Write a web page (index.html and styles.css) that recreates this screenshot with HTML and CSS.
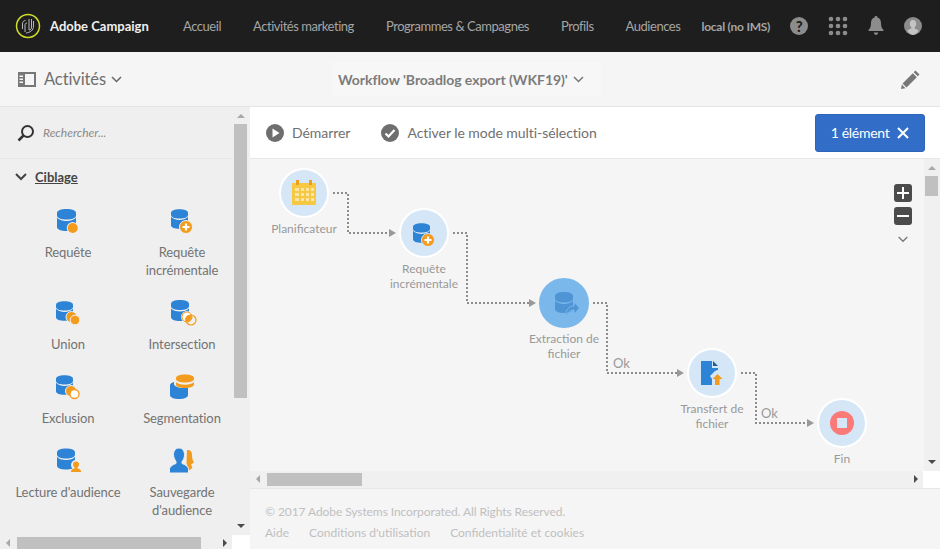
FILE: index.html
```html
<!DOCTYPE html>
<html lang="fr">
<head>
    <meta charset="UTF-8">
    <title>Adobe Campaign</title>
    <link rel="stylesheet" href="styles.css">
</head>
<body>
    <svg class="defs" width="0" height="0">
        <symbol id="db" viewBox="0 0 19 22">
            <path fill="#2d84d6" d="M0 4C0 1.500 4 0 9.500 0S19 1.500 19 4v2.500c0 2.500-4 4-9.500 4S0 9 0 6.500z"/>
            <path fill="#2d84d6" d="M0 8.500c1.500 2.300 5.500 3.500 9.500 3.500s8-1.200 9.500-3.500V18c0 2.500-4 4-9.500 4S0 20.500 0 18z"/>
        </symbol>
    </svg>

    <header class="topbar">
        <div class="brand">
            <svg class="brand-logo" width="26" height="26" viewBox="0 0 26 26">
                <circle cx="13" cy="13" r="11.500" fill="none" stroke="#cfdc2b" stroke-width="1.500"/>
                <path d="M7.500 16V11c0-2 1-3.500 3-3.500M10 19v-7c0-1 .5-2 2-2M14 17V6M16.500 14V6M14 17c2 0 2.500-1.500 2.500-3M11 20c4-.5 7.500-2.500 7.500-7V8" fill="none" stroke="#b9b9b9" stroke-width="1"/>
            </svg>
            <span>Adobe Campaign</span>
        </div>
        <nav class="topnav">
            <a href="#">Accueil</a>
            <a href="#">Activités marketing</a>
            <a href="#">Programmes &amp; Campagnes</a>
            <a href="#">Profils</a>
            <a href="#">Audiences</a>
        </nav>
        <span class="instance">local (no IMS)</span>
        <div class="top-icons">
            <span class="help">?</span>
            <svg width="20" height="20" viewBox="0 0 20 20" fill="#8c8c8c">
                <circle cx="3" cy="3" r="2.300"/><circle cx="10" cy="3" r="2.300"/><circle cx="17" cy="3" r="2.300"/>
                <circle cx="3" cy="10" r="2.300"/><circle cx="10" cy="10" r="2.300"/><circle cx="17" cy="10" r="2.300"/>
                <circle cx="3" cy="17" r="2.300"/><circle cx="10" cy="17" r="2.300"/><circle cx="17" cy="17" r="2.300"/>
            </svg>
            <svg width="16" height="20" viewBox="0 0 16 20" fill="#8c8c8c">
                <path d="M8 0c1 0 1.500.7 1.500 1.500C12 2.300 13 4.500 13 7c0 4 1 5.500 2.500 7v1H.5v-1C2 12.500 3 11 3 7c0-2.500 1-4.700 3.500-5.500C6.500.7 7 0 8 0zM5.800 16.500h4.400C10 18 9.200 18.800 8 18.800S6 18 5.800 16.500z"/>
            </svg>
            <svg width="18" height="18" viewBox="0 0 18 18">
                <circle cx="9" cy="9" r="9" fill="#8c8c8c"/>
                <path fill="#c4c4c4" d="M9 3c2 0 3.200 1.600 3.200 3.800 0 1.500-.6 2.800-1.500 3.500v1.200c1.500.5 3 1.200 4 2.200A9 9 0 0 1 9 18a9 9 0 0 1-5.700-4.300c1-1 2.500-1.700 4-2.200v-1.200C6.400 9.600 5.800 8.300 5.800 6.800 5.800 4.600 7 3 9 3z"/>
            </svg>
        </div>
    </header>

    <div class="toolbar">
        <div class="page-title">
            <svg width="18" height="15" viewBox="0 0 18 15">
                <path fill="#777" fill-rule="evenodd" d="M0 0h18v15H0zM7 2v11h9V2z"/>
                <path fill="#f5f5f5" d="M1.500 3.500h3.500v1.500H1.500zM1.500 6.500h3.500V8H1.500zM1.500 9.500h3.500V11H1.500z"/>
            </svg>
            <span>Activités</span>
            <svg class="chev" width="11" height="7" viewBox="0 0 11 7"><path d="M1 1l4.500 4.500L10 1" fill="none" stroke="#666" stroke-width="1.500"/></svg>
        </div>
        <div class="workflow-title">
            <span>Workflow 'Broadlog export (WKF19)'</span>
            <svg width="11" height="7" viewBox="0 0 11 7"><path d="M1 1l4.500 4.500L10 1" fill="none" stroke="#777" stroke-width="1.500"/></svg>
        </div>
        <svg class="pencil" width="19" height="19" viewBox="0 0 19 19">
            <path fill="#777" d="M14.500.5l4 4L16.700 6.300l-4-4zM11.800 3.200l4 4L5.500 17.500l-4-4zM.8 14.500l3.700 3.700-4.500.8z"/>
        </svg>
    </div>

    <div class="workspace">
        <aside class="palette">
            <div class="palette-scroll">
                <div class="search">
                    <svg width="18" height="18" viewBox="0 0 18 18">
                        <circle cx="10.500" cy="7.500" r="5.500" fill="none" stroke="#333" stroke-width="2"/>
                        <path d="M6.500 11.500L1.500 16.500" stroke="#333" stroke-width="2.500"/>
                    </svg>
                    <span>Rechercher...</span>
                </div>
                <div class="group-head">
                    <svg width="12" height="8" viewBox="0 0 12 8"><path d="M1 1l5 5 5-5" fill="none" stroke="#444" stroke-width="2"/></svg>
                    <span>Ciblage</span>
                </div>
                <div class="activities">
                    <div class="activity">
                        <svg width="32" height="26" viewBox="0 0 32 26">
                            <use href="#db" x="5" y="1" width="19" height="22"/>
                            <circle cx="20.700" cy="20" r="6" fill="#efefef"/><circle cx="20.700" cy="20" r="5" fill="#f29b1d"/>
                        </svg>
                        <span>Requête</span>
                    </div>
                    <div class="activity">
                        <svg width="32" height="26" viewBox="0 0 32 26">
                            <use href="#db" x="5" y="1" width="17" height="20"/>
                            <circle cx="20" cy="19" r="6.500" fill="#f29b1d" stroke="#efefef"/>
                            <path d="M20 15.500v7M16.500 19h7" stroke="#fff" stroke-width="2.200"/>
                        </svg>
                        <span>Requête incrémentale</span>
                    </div>
                    <div class="activity">
                        <svg width="32" height="26" viewBox="0 0 32 26">
                            <use href="#db" x="4" y="1" width="17" height="20"/>
                            <circle cx="19.500" cy="17" r="5.500" fill="#f29b1d" stroke="#efefef"/>
                            <circle cx="23" cy="20" r="4.800" fill="#f29b1d" stroke="#efefef"/>
                        </svg>
                        <span>Union</span>
                    </div>
                    <div class="activity">
                        <svg width="32" height="26" viewBox="0 0 32 26">
                            <use href="#db" x="5" y="0" width="18" height="21"/>
                            <circle cx="21" cy="17" r="5" fill="#efefef" stroke="#efefef" stroke-width="2"/>
                            <circle cx="21" cy="17" r="5" fill="#fff" stroke="#f29b1d" stroke-width="1"/>
                            <circle cx="25" cy="20" r="5" fill="none" stroke="#f29b1d" stroke-width="1.200"/>
                            <path d="M19.500 22a5 5 0 0 0 5.800-7 5 5 0 0 0-5.800 7z" fill="#f29b1d"/>
                        </svg>
                        <span>Intersection</span>
                    </div>
                    <div class="activity">
                        <svg width="32" height="26" viewBox="0 0 32 26">
                            <use href="#db" x="4" y="1" width="17" height="20"/>
                            <circle cx="19" cy="17" r="5.500" fill="#f29b1d" stroke="#efefef"/>
                            <circle cx="22.500" cy="20" r="4.500" fill="#fff" stroke="#f29b1d" stroke-width="1.300"/>
                        </svg>
                        <span>Exclusion</span>
                    </div>
                    <div class="activity">
                        <svg width="32" height="26" viewBox="0 0 32 26">
                            <path fill="#2d84d6" d="M4 11c0-1.500 2-2.500 4-3v2.500c1 2 5 3.500 9 3.500 2 0 4-.2 5-.6V21c0 2.500-4 4-9 4s-9-1.500-9-4z"/>
                            <path fill="#f29b1d" d="M10 4c0-2 4-3.500 9-3.500s9 1.500 9 3.500v1c0 2-4 3.500-9 3.500S10 7 10 5z"/>
                            <path fill="#f29b1d" d="M10 8c1.500 1.800 5 2.800 9 2.800s7.500-1 9-2.800v2.500c0 2-4 3.500-9 3.500s-9-1.500-9-3.500z"/>
                        </svg>
                        <span>Segmentation</span>
                    </div>
                    <div class="activity">
                        <svg width="32" height="26" viewBox="0 0 32 26">
                            <use href="#db" x="5" y="0" width="18" height="22"/>
                            <circle cx="24" cy="17" r="5" fill="#efefef"/>
                            <circle cx="24" cy="16.500" r="3" fill="#f29b1d"/>
                            <path fill="#f29b1d" d="M22.500 19h3v1.500c1.500.4 3 1 3.500 2.500v1H19v-1c.5-1.500 2-2.100 3.500-2.500z"/>
                        </svg>
                        <span>Lecture d'audience</span>
                    </div>
                    <div class="activity">
                        <svg width="32" height="26" viewBox="0 0 32 26">
                            <path fill="#f29b1d" d="M21 2c3-.5 5 1.500 5 4.500 0 3 .5 6 2 8l-3 2 1.500 3-3 3-3-7z"/>
                            <path fill="#2d84d6" stroke="#efefef" d="M13 0c3.500 0 5.500 3 5.500 6.500 0 3-1 5.500-2.500 7v2c3 1 5.500 2.500 6.500 5V25h-19v-4.500c1-2.500 3.500-4 6.500-5v-2C9 12 7.500 9.500 7.500 6.500 7.500 3 9.500 0 13 0z"/>
                        </svg>
                        <span>Sauvegarde d'audience</span>
                    </div>
                </div>
            </div>
            <div class="vscroll palette-v">
                <i class="arrow up"></i>
                <b class="thumb"></b>
                <i class="arrow down"></i>
            </div>
            <div class="hscroll palette-h">
                <i class="arrow left"></i>
                <b class="thumb"></b>
                <i class="arrow right"></i>
            </div>
            <div class="corner palette-corner"></div>
        </aside>

        <main class="main">
            <div class="actions">
                <a class="action" href="#">
                    <svg width="18" height="18" viewBox="0 0 18 18">
                        <circle cx="9" cy="9" r="9" fill="#6e6e6e"/>
                        <path fill="#fff" d="M6.500 4.500L13.500 9l-7 4.500z"/>
                    </svg>
                    Démarrer
                </a>
                <a class="action" href="#">
                    <svg width="18" height="18" viewBox="0 0 18 18">
                        <circle cx="9" cy="9" r="9" fill="#6e6e6e"/>
                        <path d="M4.500 9.500l3 3L13.500 6" fill="none" stroke="#fff" stroke-width="2.200"/>
                    </svg>
                    Activer le mode multi-sélection
                </a>
                <button class="selection">
                    1 élément
                    <svg width="12" height="12" viewBox="0 0 12 12"><path d="M1 1l10 10M11 1L1 11" stroke="#fff" stroke-width="2"/></svg>
                </button>
            </div>

            <div class="canvas">
                <svg class="edges" width="674" height="312" viewBox="0 0 674 312">
                    <g fill="none" stroke="#8c8c8c" stroke-width="2" stroke-dasharray="2 2">
                        <path d="M83 34H98V74H139"/>
                        <path d="M203 74H217V144H279"/>
                        <path d="M343 144H357V214H427"/>
                        <path d="M491 214H506V264H557"/>
                    </g>
                    <g fill="#999">
                        <path d="M139 70l7 4-7 4z"/>
                        <path d="M279 140l7 4-7 4z"/>
                        <path d="M427 210l7 4-7 4z"/>
                        <path d="M557 260l7 4-7 4z"/>
                    </g>
                </svg>
                <span class="edge-label ok-one">Ok</span>
                <span class="edge-label ok-two">Ok</span>

                <div class="node node-schedule">
                    <div class="bubble">
                        <svg width="26" height="26" viewBox="0 0 26 26">
                            <path fill="#f7c843" d="M1 3h24v22H1z"/>
                            <path fill="#ee9f1c" d="M5 0h3v5H5zM18 0h3v5h-3z"/>
                            <path fill="#fbe6a9" d="M4 8h4v3H4zM10 8h3v3h-3zM15 8h3v3h-3zM20 8h3v3h-3zM4 13h4v3H4zM10 13h3v3h-3zM15 13h3v3h-3zM20 13h3v3h-3zM4 18h4v3H4zM10 18h3v3h-3zM15 18h3v3h-3zM20 18h3v3h-3z"/>
                        </svg>
                    </div>
                    <span>Planificateur</span>
                </div>
                <div class="node node-query">
                    <div class="bubble">
                        <svg width="26" height="26" viewBox="0 0 26 26">
                            <use href="#db" x="2" y="3" width="17" height="20"/>
                            <circle cx="17" cy="20" r="6.500" fill="#f29b1d" stroke="#d5e6f6"/>
                            <path d="M17 16.500v7M13.500 20h7" stroke="#fff" stroke-width="2.200"/>
                        </svg>
                    </div>
                    <span>Requête incrémentale</span>
                </div>
                <div class="node node-extract">
                    <div class="bubble selected">
                        <svg width="30" height="28" viewBox="0 0 30 28">
                            <path fill="#4f94d4" d="M6 7c0-2.500 4-4 9-4s9 1.500 9 4v2.500c0 2.500-4 4-9 4s-9-1.500-9-4zM6 11.500c1.500 2.300 5 3.500 9 3.500s7.500-1.200 9-3.500V20c0 2.500-4 4-9 4s-9-1.500-9-4z"/>
                            <path fill="#4f94d4" stroke="#7ab8ec" d="M16.500 27c0-6 3.500-10 8.500-10v-4l5.500 6-5.500 6v-4c-3 0-6 1.500-8.500 6z"/>
                        </svg>
                    </div>
                    <span>Extraction de fichier</span>
                </div>
                <div class="node node-transfer">
                    <div class="bubble">
                        <svg width="26" height="26" viewBox="0 0 26 26">
                            <path fill="#2d84d6" d="M2 1h11v7h6v2c-2 0-3 1-4 2l-4 4 2 3v6H2z"/>
                            <path fill="#1f5f9e" d="M14 1l5 5h-5z"/>
                            <path fill="#f29b1d" d="M18.500 14l5 5h-3v6H16v-6h-2.500z"/>
                        </svg>
                    </div>
                    <span>Transfert de fichier</span>
                </div>
                <div class="node node-end">
                    <div class="bubble"><i class="stop"></i></div>
                    <span>Fin</span>
                </div>

                <div class="zoom-tools">
                    <span class="zoom-btn">
                        <svg width="12" height="12" viewBox="0 0 12 12"><path d="M6 0v12M0 6h12" stroke="#fff" stroke-width="2"/></svg>
                    </span>
                    <span class="zoom-btn">
                        <svg width="12" height="12" viewBox="0 0 12 12"><path d="M0 6h12" stroke="#fff" stroke-width="2"/></svg>
                    </span>
                    <svg class="zoom-chev" width="10" height="7" viewBox="0 0 10 7"><path d="M.7 1L5 5.300 9.300 1" fill="none" stroke="#777" stroke-width="1.300"/></svg>
                </div>

                <div class="vscroll canvas-v">
                    <i class="arrow up"></i>
                    <b class="thumb"></b>
                    <i class="arrow down"></i>
                </div>
            </div>

            <div class="canvas-bottom">
                <div class="hscroll canvas-h">
                    <i class="arrow left"></i>
                    <b class="thumb"></b>
                    <i class="arrow right"></i>
                </div>
                <div class="corner canvas-corner"></div>
            </div>

            <footer class="footer">
                <p>© 2017 Adobe Systems Incorporated. All Rights Reserved.</p>
                <ul>
                    <li><a href="#">Aide</a></li>
                    <li><a href="#">Conditions d'utilisation</a></li>
                    <li><a href="#">Confidentialité et cookies</a></li>
                </ul>
            </footer>
        </main>
    </div>
</body>
</html>
```

FILE: styles.css
```css
* {
    box-sizing: border-box;
}
html, body {
    margin: 0;
    height: 100%;
}
body {
    font-family: Lato, "Open Sans", sans-serif;
    font-size: 14px;
    color: #6e6e6e;
    width: 940px;
    height: 549px;
    overflow: hidden;
    display: flex;
    flex-direction: column;
    background-color: #f5f5f5;
}
a {
    color: inherit;
    text-decoration: none;
}
.defs {
    position: absolute;
}

/* top bar */
.topbar {
    height: 52px;
    flex: none;
    background-color: #1e1e1e;
    display: flex;
    align-items: center;
    padding-left: 15px;
    color: #a5a5a5;
}
.brand {
    display: flex;
    align-items: center;
    gap: 9px;
    width: 168px;
    flex: none;
    color: #f0f0f0;
    font-size: 13px;
    font-weight: 700;
    white-space: nowrap;
}
.topnav {
    display: flex;
    flex: none;
    gap: 32px;
    font-size: 13px;
    letter-spacing: -0.46px;
    white-space: nowrap;
}
.instance {
    margin-left: 21px;
    font-size: 12px;
    font-weight: 700;
    letter-spacing: -0.25px;
    white-space: nowrap;
}
.top-icons {
    display: flex;
    align-items: center;
    flex: none;
    margin-left: 20px;
    gap: 20px;
}
.help {
    width: 18px;
    height: 18px;
    border-radius: 50%;
    background-color: #8c8c8c;
    color: #1e1e1e;
    font-size: 15px;
    font-weight: 900;
    line-height: 18px;
    text-align: center;
}

/* toolbar */
.toolbar {
    height: 55px;
    flex: none;
    display: flex;
    align-items: center;
    padding: 0 20px 0 18px;
    border-bottom: 1px solid #e4e4e4;
}
.page-title {
    display: flex;
    align-items: center;
    width: 314px;
    font-size: 16.500px;
    letter-spacing: -0.1px;
    color: #6e6e6e;
}
.page-title span {
    margin: 0 5px 0 8px;
}
.workflow-title {
    display: flex;
    align-items: center;
    gap: 5px;
    height: 34px;
    padding: 0 17px 0 6px;
    background-color: #f7f7f7;
    font-weight: 700;
    color: #7c7c7c;
    font-size: 14px;
    letter-spacing: -0.05px;
}
.pencil {
    margin-left: auto;
}

/* left panel */
.workspace {
    flex: 1;
    display: flex;
    min-height: 0;
}
.palette {
    position: relative;
    width: 250px;
    flex: none;
    background-color: #efefef;
    overflow: hidden;
}
.search {
    height: 52px;
    padding-left: 17px;
    display: flex;
    align-items: center;
    gap: 8px;
    border-bottom: 1px solid #e7e7e7;
    font-size: 12px;
    font-style: italic;
    color: #8a8a8a;
}
.group-head {
    display: flex;
    align-items: center;
    gap: 8px;
    padding: 10px 0 0 15px;
    font-size: 13px;
    color: #444;
    font-weight: 700;
}
.group-head span {
    text-decoration: underline;
}
.activities {
    display: grid;
    grid-template-columns: 114px 114px;
    column-gap: 0;
    row-gap: 21px;
    margin: 23px 0 0 11px;
}
.activity {
    display: flex;
    flex-direction: column;
    align-items: center;
    gap: 9px;
    text-align: center;
    line-height: 18px;
    font-size: 13px;
    letter-spacing: -0.1px;
    color: #737373;
}
.activity span {
    max-width: 112px;
}

/* scrollbars */
.vscroll, .hscroll {
    position: absolute;
    background-color: #f0f0f0;
}
.thumb {
    position: absolute;
    background-color: #c0c0c0;
}
.arrow {
    position: absolute;
    width: 0;
    height: 0;
    border: 4px solid transparent;
}
.arrow.up {
    border-bottom-color: #a8a8a8;
    border-top-width: 0;
    border-bottom-width: 4px;
    top: 7px;
    left: 4px;
}
.arrow.down {
    border-top-color: #4a4a4a;
    border-bottom-width: 0;
    border-top-width: 4px;
    bottom: 7px;
    left: 4px;
}
.arrow.left {
    border-right-color: #a8a8a8;
    border-left-width: 0;
    border-right-width: 4px;
    left: 6px;
    top: 4px;
}
.arrow.right {
    border-left-color: #4a4a4a;
    border-right-width: 0;
    border-left-width: 4px;
    right: 5px;
    top: 4px;
}
.palette-v {
    right: 0;
    top: 0;
    width: 17px;
    bottom: 14px;
    background-color: #efefef;
}
.palette-v .thumb {
    top: 17px;
    left: 1px;
    width: 13px;
    height: 274px;
}
.palette-h {
    left: 0;
    right: 18px;
    bottom: 0;
    height: 12px;
    background-color: #efefef;
}
.palette-h .thumb {
    left: 17px;
    top: 0;
    width: 184px;
    height: 12px;
}
.palette-h .arrow {
    top: 2px;
}
.palette-corner {
    position: absolute;
    right: 0;
    bottom: 0;
    width: 18px;
    height: 14px;
    background-color: #fff;
}

/* main column */
.main {
    flex: 1;
    min-width: 0;
    display: flex;
    flex-direction: column;
}
.actions {
    height: 52px;
    flex: none;
    display: flex;
    align-items: center;
    gap: 31px;
    padding: 0 15px 0 16px;
    background-color: #fff;
    border-bottom: 1px solid #e7e7e7;
}
.action {
    display: flex;
    align-items: center;
    gap: 8px;
    font-size: 14px;
    letter-spacing: -0.05px;
    color: #707070;
}
.selection {
    margin-left: auto;
    width: 110px;
    height: 38px;
    display: flex;
    align-items: center;
    justify-content: center;
    gap: 8px;
    border: 1px solid #2c64b8;
    border-radius: 3px;
    background-color: #326ec8;
    color: #fff;
    font-family: inherit;
    font-size: 14px;
    letter-spacing: -0.3px;
}

/* workflow canvas */
.canvas {
    position: relative;
    height: 312px;
    flex: none;
    overflow: hidden;
}
.edges {
    position: absolute;
    left: 0;
    top: 0;
}
.edge-label {
    position: absolute;
    font-size: 13px;
    line-height: 16px;
    color: #999;
}
.ok-one {
    left: 363px;
    top: 196px;
}
.ok-two {
    left: 511px;
    top: 246px;
}
.node {
    position: absolute;
    width: 100px;
    display: flex;
    flex-direction: column;
    align-items: center;
    text-align: center;
    font-size: 12px;
    line-height: 15px;
    color: #999;
}
.node span {
    margin-top: 3px;
    max-width: 90px;
}
.bubble {
    width: 50px;
    height: 50px;
    border-radius: 50%;
    background-color: #d5e6f6;
    border: 2px solid #fff;
    display: flex;
    align-items: center;
    justify-content: center;
}
.bubble.selected {
    background-color: #7ab8ec;
    border-color: #7ab8ec;
}
.stop {
    width: 24px;
    height: 24px;
    border-radius: 50%;
    background-color: #fb7a78;
    display: flex;
    align-items: center;
    justify-content: center;
}
.stop::after {
    content: "";
    width: 10px;
    height: 10px;
    background-color: #d5e6f6;
}
.node-schedule {
    left: 4px;
    top: 9px;
}
.node-query {
    left: 124px;
    top: 49px;
}
.node-extract {
    left: 264px;
    top: 119px;
}
.node-transfer {
    left: 412px;
    top: 189px;
}
.node-end {
    left: 542px;
    top: 239px;
}
.zoom-tools {
    position: absolute;
    left: 644px;
    top: 25px;
    display: flex;
    flex-direction: column;
    align-items: center;
    gap: 5px;
}
.zoom-btn {
    width: 18px;
    height: 18px;
    border-radius: 3px;
    background-color: #4b4b4b;
    display: flex;
    align-items: center;
    justify-content: center;
}
.zoom-chev {
    margin-top: 6px;
}
.canvas-v {
    right: 0;
    top: 0;
    bottom: 0;
    width: 16px;
}
.canvas-v .thumb {
    top: 17px;
    left: 1px;
    width: 13px;
    height: 20px;
}
.canvas-bottom {
    position: relative;
    height: 17px;
    flex: none;
}
.canvas-h {
    left: 0;
    right: 17px;
    top: 0;
    bottom: 0;
}
.canvas-h .thumb {
    left: 17px;
    top: 2px;
    width: 95px;
    height: 13px;
}
.canvas-corner {
    position: absolute;
    right: 0;
    top: 0;
    bottom: 0;
    width: 17px;
    background-color: #fff;
}

/* footer */
.footer {
    flex: 1;
    border-top: 1px solid #e7e7e7;
    padding: 15px 15px 0;
    font-size: 12px;
    color: #c0c0c0;
}
.footer p {
    margin: 0 0 6px;
    line-height: 15px;
    letter-spacing: -0.08px;
}
.footer ul {
    list-style-type: none;
    margin: 0;
    padding: 0;
    display: flex;
    gap: 20px;
    line-height: 15px;
}
```
